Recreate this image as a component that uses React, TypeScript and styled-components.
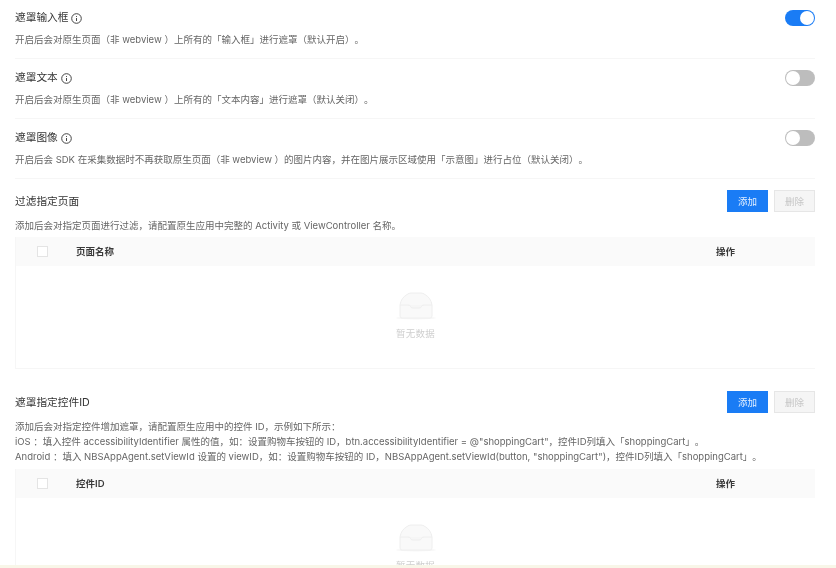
import React from 'react';
import styled, { createGlobalStyle } from 'styled-components';

const GlobalStyle = createGlobalStyle`
  html, body {
    margin: 0;
    height: 568px;
    overflow: hidden;
    background: #fff;
    font-family: Inter, "Noto Sans CJK SC", sans-serif;
    text-spacing-trim: space-all;
  }
`;

const Page = styled.div`
  padding: 0 21px 0 15px;
  filter: blur(0.45px);
`;

const SwitchRow = styled.div`
  height: 47px;
  padding-top: 12px;
  border-bottom: 1px solid #f6f6f6;
  display: flex;
  justify-content: space-between;

  &:first-child {
    padding-top: 11px;
  }
`;

const RowTitle = styled.div`
  display: flex;
  align-items: center;
  gap: 3px;
  height: 14px;
  font-size: 10.7px;
  line-height: 14px;
  color: #333;
`;

const RowDesc = styled.div`
  margin-top: 8px;
  font-size: 9.5px;
  line-height: 14px;
  color: #666;
`;

const Toggle = styled.div<{ $on?: boolean }>`
  width: 30px;
  height: 16px;
  margin-top: -1px;
  border-radius: 8px;
  background: ${p => (p.$on ? '#1a7cf5' : '#bdbdbd')};
  display: flex;
  justify-content: ${p => (p.$on ? 'flex-end' : 'flex-start')};
  align-items: center;
  padding: 1px;
  box-sizing: border-box;
`;

const Knob = styled.div`
  width: 14px;
  height: 14px;
  border-radius: 50%;
  background: #fff;
`;

const Section = styled.section<{ $top: number }>`
  padding-top: ${p => p.$top}px;
`;

const SectionHead = styled.div`
  display: flex;
  align-items: center;
  justify-content: space-between;
  height: 22px;
`;

const SectionTitle = styled.div`
  padding-bottom: 2px;
  font-size: 10.7px;
  color: #333;
`;

const Buttons = styled.div`
  display: flex;
  gap: 6px;
`;

const Button = styled.div<{ $primary?: boolean }>`
  width: 41px;
  height: 22px;
  box-sizing: border-box;
  display: flex;
  align-items: center;
  justify-content: center;
  font-size: 9.5px;
  color: ${p => (p.$primary ? '#e4f0ff' : '#c6c6c6')};
  background: ${p => (p.$primary ? '#1a7cf5' : '#f5f5f5')};
  border: 1px solid ${p => (p.$primary ? '#1a7cf5' : '#e6e6e6')};
`;

const SectionDesc = styled.div<{ $bottom: number }>`
  margin: 6px 0 ${p => p.$bottom}px;
  font-size: 9.5px;
  line-height: 15px;
  color: #666;
`;

const Table = styled.div`
  border: solid #f6f6f6;
  border-width: 0 0 1px 1px;
`;

const HeaderRow = styled.div`
  display: flex;
  align-items: center;
  height: 29px;
  padding-bottom: 1px;
  box-sizing: border-box;
  background: #fafafa;
  font-size: 9.5px;
  font-weight: 600;
  color: #3a3a3a;
`;

const CheckCell = styled.div`
  width: 60px;
  padding-left: 21px;
  box-sizing: border-box;
`;

const Checkbox = styled.div`
  width: 11px;
  height: 11px;
  box-sizing: border-box;
  background: #fff;
  border: 1px solid #e4e4e4;
`;

const NameCell = styled.div`
  flex: 1;
`;

const ActionCell = styled.div`
  width: 99px;
`;

const EmptyBody = styled.div`
  height: 102px;
  display: flex;
  flex-direction: column;
  align-items: center;
  padding-top: 26px;
  box-sizing: border-box;
`;

const EmptyText = styled.div`
  margin-top: 7px;
  font-size: 9.5px;
  line-height: 14px;
  letter-spacing: 0.3px;
  color: #cfcfcf;
`;

const BottomStrip = styled.div`
  position: fixed;
  left: 0;
  right: 0;
  bottom: 0;
  height: 3px;
  background: #f8f6e8;
`;

const InfoIcon: React.FC = () => (
  <svg width="11" height="11" viewBox="0 0 11 11" fill="none" stroke="#444">
    <circle cx="5.5" cy="5.5" r="4.8" />
    <path d="M5.5 5 V8" />
    <path d="M5.5 3 V3.9" />
  </svg>
);

const EmptyIcon: React.FC = () => (
  <svg width="42" height="28" viewBox="0 0 42 28" fill="none">
    <ellipse cx="21" cy="26" rx="20" ry="1.4" fill="#f6f6f6" />
    <path
      d="M5 13 Q6 6 12 2.5 Q14 1 16 1 H26 Q28 1 30 2.5 Q36 6 37 13 V24 Q37 26 35 26 H7 Q5 26 5 24 Z"
      fill="#f9f9f9"
      stroke="#eeeeee"
    />
    <path
      d="M5 13 H13 Q15 13 15.5 14.5 Q16 16 18 16 H24 Q26 16 26.5 14.5 Q27 13 29 13 H37"
      fill="#f6f6f6"
      stroke="#eeeeee"
    />
  </svg>
);

interface SwitchItem {
  title: string;
  desc: string;
  on?: boolean;
}

const switches: SwitchItem[] = [
  {
    title: '遮罩输入框',
    desc: '开启后会对原生页面（非 webview ）上所有的「输入框」进行遮罩（默认开启）。',
    on: true,
  },
  {
    title: '遮罩文本',
    desc: '开启后会对原生页面（非 webview ）上所有的「文本内容」进行遮罩（默认关闭）。',
  },
  {
    title: '遮罩图像',
    desc: '开启后会 SDK 在采集数据时不再获取原生页面（非 webview ）的图片内容，并在图片展示区域使用「示意图」进行占位（默认关闭）。',
  },
];

const App: React.FC = () => {
  return (
    <>
      <GlobalStyle />
      <Page>
        {switches.map(item => (
          <SwitchRow key={item.title}>
            <div>
              <RowTitle>
                {item.title}
                <InfoIcon />
              </RowTitle>
              <RowDesc>{item.desc}</RowDesc>
            </div>
            <Toggle $on={item.on}>
              <Knob />
            </Toggle>
          </SwitchRow>
        ))}

        <Section $top={11}>
          <SectionHead>
            <SectionTitle>过滤指定页面</SectionTitle>
            <Buttons>
              <Button $primary>添加</Button>
              <Button>删除</Button>
            </Buttons>
          </SectionHead>
          <SectionDesc $bottom={4}>
            添加后会对指定页面进行过滤，请配置原生应用中完整的 Activity 或 ViewController 名称。
          </SectionDesc>
          <Table>
            <HeaderRow>
              <CheckCell>
                <Checkbox />
              </CheckCell>
              <NameCell>页面名称</NameCell>
              <ActionCell>操作</ActionCell>
            </HeaderRow>
            <EmptyBody>
              <EmptyIcon />
              <EmptyText>暂无数据</EmptyText>
            </EmptyBody>
          </Table>
        </Section>

        <Section $top={22}>
          <SectionHead>
            <SectionTitle>遮罩指定控件ID</SectionTitle>
            <Buttons>
              <Button $primary>添加</Button>
              <Button>删除</Button>
            </Buttons>
          </SectionHead>
          <SectionDesc $bottom={5}>
            添加后会对指定控件增加遮罩，请配置原生应用中的控件 ID，示例如下所示：
            <br />
            iOS ：填入控件 accessibilityIdentifier 属性的值，如：设置购物车按钮的 ID，btn.accessibilityIdentifier = @"shoppingCart"，控件ID列填入「shoppingCart」。
            <br />
            Android ：填入 NBSAppAgent.setViewId 设置的 viewID，如：设置购物车按钮的 ID，NBSAppAgent.setViewId(button, "shoppingCart")，控件ID列填入「shoppingCart」。
          </SectionDesc>
          <Table>
            <HeaderRow>
              <CheckCell>
                <Checkbox />
              </CheckCell>
              <NameCell>控件ID</NameCell>
              <ActionCell>操作</ActionCell>
            </HeaderRow>
            <EmptyBody>
              <EmptyIcon />
              <EmptyText>暂无数据</EmptyText>
            </EmptyBody>
          </Table>
        </Section>
      </Page>
      <BottomStrip />
    </>
  );
};

export default App;
